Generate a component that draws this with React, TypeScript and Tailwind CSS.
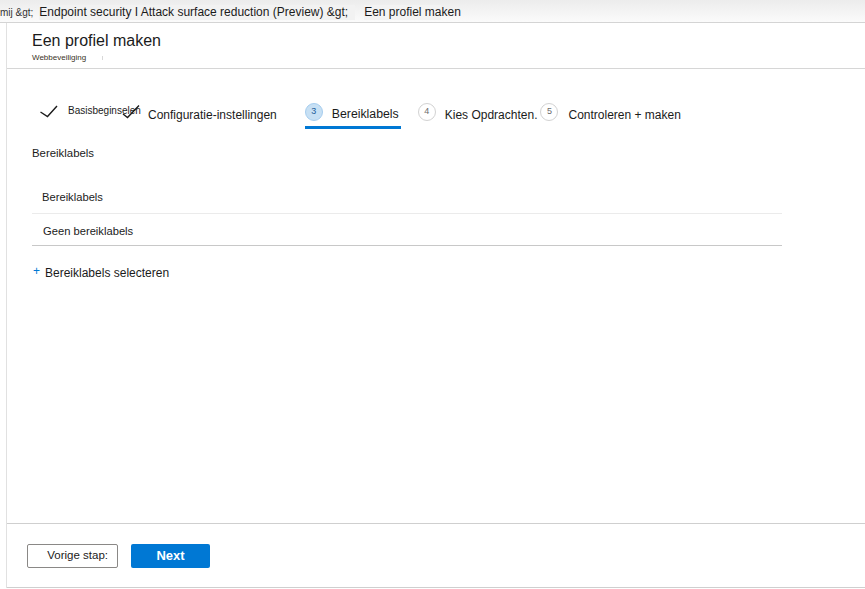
import React from "react";

function Check({ points }: { points: string }) {
  return (
    <svg width="18" height="14" viewBox="0 0 18 14" className="shrink-0">
      <polyline points={points} fill="none" stroke="#1b1b1b" strokeWidth="1.4" />
    </svg>
  );
}

function StepCircle({ n, active }: { n: number; active?: boolean }) {
  return (
    <span
      className={
        active
          ? "w-[18px] h-[18px] rounded-full flex items-center justify-center text-[9px] bg-[#c7e0f4] border border-[#a6cdee] text-[#1d5e99] shrink-0"
          : "w-[18px] h-[18px] rounded-full flex items-center justify-center text-[9px] bg-white border border-[#d2d2d2] text-[#6b6b6b] shrink-0"
      }
    >
      {n}
    </span>
  );
}

export default function App() {
  return (
    <div className="h-[589px] w-full flex flex-col bg-white text-[#1b1b1b] font-['Liberation_Sans',Arial,sans-serif] overflow-hidden">
      {/* breadcrumb bar */}
      <div className="h-[23px] shrink-0 flex items-center pt-[2px] border-b border-[#d4d4d4] bg-gradient-to-b from-[#ececec] to-[#fbfbfb]">
        <span className="text-[10px] text-[#333] whitespace-nowrap">mij &amp;gt;</span>
        <span className="ml-[6px] pr-[7px] h-[15px] flex items-center bg-[#f2f2f2] text-[12px] whitespace-nowrap">
          Endpoint security I Attack surface reduction (Preview) &amp;gt;
        </span>
        <span className="ml-[9px] h-[15px] flex items-center text-[12px] whitespace-nowrap bg-[linear-gradient(to_right,#f3f3f3_77px,transparent_77px)]">
          Een profiel maken
        </span>
      </div>

      <div className="flex-1 flex min-h-0">
        <div className="w-[6px] shrink-0" />
        <div className="flex-1 flex flex-col border-l border-[#e1e1e1] mb-[1px]">
          {/* title */}
          <div className="h-[46px] shrink-0 border-b border-[#d6d6d6] pl-[25px] pt-[8px]">
            <div className="text-[16px] leading-[20px]">Een profiel maken</div>
            <div className="mt-[2px] flex items-center text-[8px] leading-[10px] text-[#3a3326]">
              Webbeveiliging
              <span className="ml-[16px] w-px h-[4px] bg-[#d8d8d8]" />
            </div>
          </div>

          {/* content */}
          <div className="flex-1 pl-[25px]">
            {/* wizard steps */}
            <div className="mt-[34px] flex items-start pl-[8px]">
              <div className="h-[18px] flex items-center">
                <Check points="0.5,7 7.5,11.5 17,1" />
                <span className="ml-[10px] w-[54px] text-[10px] whitespace-nowrap -mt-[3px]">Basisbeginselen</span>
                <Check points="1,9 5.5,12.5 17,0.5" />
                <span className="ml-[8px] text-[12px] whitespace-nowrap mt-[5px]">Configuratie-instellingen</span>
              </div>
              <div className="ml-[28px] flex flex-col">
                <div className="h-[18px] flex items-center">
                  <StepCircle n={3} active />
                  <span className="ml-[9px] mr-[2px] text-[12.3px] whitespace-nowrap mt-[5px]">Bereiklabels</span>
                </div>
                <div className="mt-[5px] h-[3px] bg-[#0078d4]" />
              </div>
              <div className="ml-[17px] h-[18px] flex items-center">
                <StepCircle n={4} />
                <span className="ml-[9px] text-[12px] whitespace-nowrap mt-[5px]">Kies Opdrachten.</span>
                <span className="ml-[3px]">
                  <StepCircle n={5} />
                </span>
                <span className="ml-[10px] text-[12px] whitespace-nowrap mt-[5px]">Controleren + maken</span>
              </div>
            </div>

            <div className="mt-[17px] text-[11.4px] leading-[14px]">Bereiklabels</div>

            <div className="mt-[22px] w-[750px]">
              <div className="h-[32px] flex items-center pl-[10px] text-[11.2px] border-b border-[#ebebeb]">
                Bereiklabels
              </div>
              <div className="h-[32px] flex items-center pl-[11px] pt-[4px] text-[11.2px] border-b border-[#c8c8c8]">
                Geen bereiklabels
              </div>
            </div>

            <div className="mt-[20px] flex items-center text-[12px] leading-[14px]">
              <span className="text-[#0078d4] text-[12px] -mt-[4px] ml-[1px]">+</span>
              <span className="ml-[5px]">Bereiklabels selecteren</span>
            </div>
          </div>

          {/* footer */}
          <div className="h-[65px] shrink-0 border-t border-b border-[#cfcfcf] pl-[20px] pt-[20px] flex items-start gap-[13px]">
            <button className="w-[91px] h-[24px] border border-[#8a8886] rounded-[2px] bg-white text-[11.5px] text-[#1b1b1b] flex items-center justify-end pr-[9px]">
              Vorige stap:
            </button>
            <button className="w-[79px] h-[24px] rounded-[2px] bg-[#0078d4] text-[13px] font-bold text-white flex items-center justify-center">
              Next
            </button>
          </div>
        </div>
      </div>
    </div>
  );
}
